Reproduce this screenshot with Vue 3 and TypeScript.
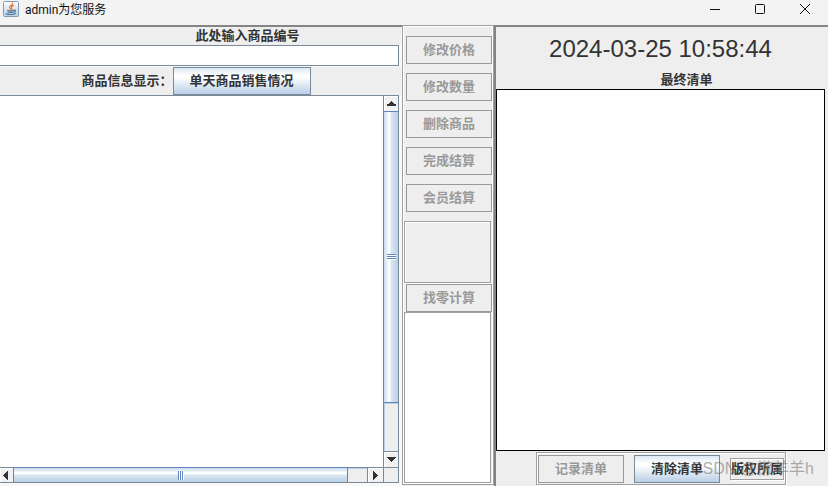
<script setup lang="ts">
import { ref } from 'vue'

interface Action {
  label: string
}

const code = ref('')
const info = ref('')
const receipt = ref('')
const change = ref('')
const now = ref('2024-03-25 10:58:44')

const actions: Action[] = [
  { label: '修改价格' },
  { label: '修改数量' },
  { label: '删除商品' },
  { label: '完成结算' },
  { label: '会员结算' },
]
</script>

<template>
  <div class="window">
    <header class="titlebar">
      <svg class="logo" viewBox="0 0 16 16" aria-hidden="true">
        <defs>
          <linearGradient id="tile" x1="0" y1="0" x2="0" y2="1">
            <stop offset="0" stop-color="#fdfeff" />
            <stop offset="1" stop-color="#b9cfe4" />
          </linearGradient>
        </defs>
        <rect x="0.5" y="0.5" width="15" height="15" rx="1" fill="url(#tile)" stroke="#7f9bb6" />
        <path d="M9.6 2.2C10 4 6.2 4.8 6.6 6.4c.2.8 1 1.2 1.2 2M10.6 4.4C8.6 5 8 5.900 8.800 7c.4.6.1 1.100-.3 1.500" fill="none" stroke="#e8782c" stroke-width="1.200" stroke-linecap="round" />
        <path d="M4.500 9.200c1.500.7 4.700.7 6.200 0M5 11c1.500.6 3.800.6 5.200 0M11 9.200c2-.6 2.200 1.500.2 2M3.200 12.700c2.200 1.200 7 1.100 9.300-.1" fill="none" stroke="#4b7196" stroke-width="1.100" stroke-linecap="round" />
      </svg>
      <span class="title">admin为您服务</span>
      <div class="controls">
        <button type="button" aria-label="最小化">
          <svg viewBox="0 0 12 12"><path d="M1 6.500h10" /></svg>
        </button>
        <button type="button" aria-label="最大化">
          <svg viewBox="0 0 12 12"><rect x="1.500" y="1.500" width="9" height="9" rx="1" /></svg>
        </button>
        <button type="button" aria-label="关闭">
          <svg viewBox="0 0 12 12"><path d="M1 1l10 10M11 1L1 11" /></svg>
        </button>
      </div>
    </header>

    <main class="body">
      <section class="entry">
        <label class="caption" for="code">此处输入商品编号</label>
        <input id="code" v-model="code" class="code" type="text" />
        <div class="toolbar">
          <label for="info">商品信息显示：</label>
          <button type="button" class="btn wide">单天商品销售情况</button>
        </div>
        <div class="scrollpane">
          <textarea id="info" v-model="info" class="view"></textarea>
          <div class="vbar">
            <button type="button" class="arrow" aria-label="向上">
              <svg viewBox="0 0 9 5"><path d="M4 0h1v1h1v1h1v1h2v2H0V3h2V2h1V1h1z" /></svg>
            </button>
            <div class="vthumb"><i class="grip"></i></div>
            <div class="vtrack"></div>
            <button type="button" class="arrow" aria-label="向下">
              <svg viewBox="0 0 9 5"><path d="M0 0h9v1H8v1H7v1H6v1H5v1H4V4H3V3H2V2H1V1H0z" /></svg>
            </button>
          </div>
          <div class="hbar">
            <button type="button" class="arrow first" aria-label="向左">
              <svg class="side" viewBox="0 0 5 9"><path d="M4 0h1v9H4V8H3V7H2V6H1V5H0V4h1V3h1V2h1V1h1z" /></svg>
            </button>
            <div class="hthumb"><i class="grip upright"></i></div>
            <div class="htrack"></div>
            <button type="button" class="arrow last" aria-label="向右">
              <svg class="side" viewBox="0 0 5 9"><path d="M0 0h1v1h1v1h1v1h1v1h1v1H4v1H3v1H2v1H1v1H0z" /></svg>
            </button>
          </div>
          <div class="corner"></div>
        </div>
      </section>

      <section class="actions">
        <div class="stack">
          <button v-for="a in actions" :key="a.label" type="button" class="btn" disabled>{{ a.label }}</button>
        </div>
        <div class="slot"></div>
        <button type="button" class="btn" disabled>找零计算</button>
        <textarea v-model="change" class="change" aria-label="找零计算"></textarea>
      </section>

      <section class="receipt">
        <time class="clock">{{ now }}</time>
        <label class="heading" for="receipt">最终清单</label>
        <textarea id="receipt" v-model="receipt" class="list"></textarea>
        <footer class="bottom">
          <div class="group">
            <button type="button" class="btn" disabled>记录清单</button>
            <button type="button" class="btn">清除清单</button>
            <span class="rights">版权所属</span>
          </div>
        </footer>
      </section>
    </main>
    <span class="watermark">CSDN @懒羊羊h</span>
  </div>
</template>

<style>
body {
  margin: 0;
}
</style>

<style scoped>
.window,
.window * {
  box-sizing: border-box;
}
.window {
  position: relative;
  display: flex;
  flex-direction: column;
  height: 100vh;
  overflow: hidden;
  background: #eeeeee;
  color: #333333;
  font: bold 13px/18px "Liberation Sans", "Noto Sans CJK SC", sans-serif;
}
button,
input,
textarea {
  margin: 0;
  padding: 0;
  border: 0;
  border-radius: 0;
  font: inherit;
  color: inherit;
}
textarea {
  display: block;
  resize: none;
  background: #ffffff;
}
.titlebar {
  display: flex;
  align-items: flex-start;
  flex: none;
  height: 25px;
  padding: 1px 1px 0 3px;
  background: #f3f3f3;
}
.logo {
  width: 16px;
  height: 16px;
}
.title {
  margin-left: 6px;
  color: #111111;
  font: 12px/18px Roboto, "Noto Sans CJK SC", sans-serif;
}
.controls {
  display: flex;
  margin-left: auto;
}
.controls button {
  display: flex;
  align-items: center;
  justify-content: center;
  width: 45px;
  height: 16px;
  background: none;
}
.controls svg {
  width: 12px;
  height: 12px;
  fill: none;
  stroke: #111111;
}
.body {
  display: grid;
  grid-template-columns: minmax(0, 402fr) 92px minmax(0, 334fr);
  flex: 1;
  min-height: 0;
}
.entry {
  display: flex;
  flex-direction: column;
  min-height: 0;
  padding: 0 3px 3px 0;
  border-top: 2px solid #848484;
  background: #f8f8f8;
}
.caption {
  flex: none;
  margin-right: -2px;
  padding-left: 94px;
  text-align: center;
  background: #eeeeee;
}
.code {
  flex: none;
  width: 100%;
  height: 21px;
  border: 1px solid #7a8a99;
  border-left: 0;
  background: #ffffff;
}
.toolbar {
  display: flex;
  align-items: center;
  justify-content: center;
  flex: none;
  height: 28px;
  margin: 1px -2px 0 0;
  padding-right: 9px;
  background: #eeeeee;
}
.btn {
  flex: none;
  width: 86px;
  height: 28px;
  border: 1px solid #7a8a99;
  background: linear-gradient(#dde8f3 0%, #ffffff 30%, #ffffff 36%, #b8cfe5 100%);
  white-space: nowrap;
}
.btn.wide {
  width: 138px;
}
.btn:disabled {
  border-color: #999999;
  background: #eeeeee;
  color: #999999;
}
.scrollpane {
  display: grid;
  grid-template: minmax(0, 1fr) 16px / minmax(0, 1fr) 16px;
  flex: 1;
  min-height: 0;
  border-top: 1px solid #7a8a99;
}
.view {
  width: 100%;
  height: 100%;
}
.vbar,
.hbar {
  display: flex;
  background: #eeeeee;
}
.vbar {
  flex-direction: column;
  border-left: 1px solid #7a8a99;
  border-right: 1px solid #7a8a99;
}
.hbar {
  border-top: 1px solid #7a8a99;
  border-bottom: 1px solid #7a8a99;
}
.arrow {
  display: flex;
  align-items: center;
  justify-content: center;
  flex: none;
  width: 14px;
  height: 15px;
  background: #f1f1f1;
  box-shadow: inset 1px 1px #ffffff;
}
.vtrack + .arrow {
  height: 16px;
  border-top: 1px solid #7a8a99;
}
.hbar .arrow {
  width: 16px;
  height: 14px;
}
.hbar .first {
  width: 13px;
  padding-right: 3px;
}
.hbar .last {
  border-left: 1px solid #7a8a99;
}
.arrow svg {
  width: 9px;
  height: 5px;
  fill: #333333;
}
.arrow .side {
  width: 5px;
  height: 9px;
}
.vthumb,
.hthumb {
  display: flex;
  align-items: center;
  justify-content: center;
}
.vthumb {
  flex: 293;
  margin-left: -1px;
  border: 1px solid #6382bf;
  border-right: 0;
  background: linear-gradient(90deg, #c8dbee, #ffffff 36%, #ffffff 40%, #dce8f3 50%, #b8cfe5);
}
.vtrack {
  flex: 47;
  border-left: 1px solid #b8cfe5;
  border-top: 1px solid #b8cfe5;
}
.hthumb {
  flex: 336;
  margin-top: -1px;
  border: 1px solid #6382bf;
  border-bottom: 0;
  background: linear-gradient(#c8dbee, #ffffff 36%, #ffffff 40%, #dce8f3 50%, #b8cfe5);
}
.htrack {
  flex: 19;
  border-top: 1px solid #b8cfe5;
}
.grip {
  width: 9px;
  height: 6px;
  background: repeating-linear-gradient(#6382bf 0 1px, #ffffff 1px 2px);
}
.grip.upright {
  width: 6px;
  height: 9px;
  background: repeating-linear-gradient(90deg, #6382bf 0 1px, #ffffff 1px 2px);
}
.corner {
  border: 1px solid #7a8a99;
  background: #eeeeee;
}
.actions {
  display: flex;
  flex-direction: column;
  min-height: 0;
  margin-bottom: 1px;
  padding: 10px 0 1px 1px;
  border: 1px solid #a0a0a0;
  box-shadow: inset 1px 1px #ffffff, inset -1px -1px #ffffff;
}
.actions .btn {
  margin-left: 2px;
}
.stack {
  display: flex;
  flex-direction: column;
  gap: 9px;
}
.slot {
  flex: none;
  width: 87px;
  height: 62px;
  margin: 9px 0 1px;
  border: 1px solid #a0a0a0;
  box-shadow: inset 1px 1px #ffffff, 0 1px #ffffff;
}
.change {
  flex: 1;
  width: 87px;
  min-height: 0;
  border: 1px solid #a0a0a0;
}
.receipt {
  display: flex;
  flex-direction: column;
  min-height: 0;
  border-top: 2px solid #848484;
  border-left: 2px solid #848484;
}
.clock {
  flex: none;
  padding-right: 3px;
  text-align: center;
  font: 24px/44px "Liberation Sans", sans-serif;
}
.heading {
  flex: none;
  height: 18px;
  padding-left: 49px;
  text-align: center;
}
.list {
  flex: 1;
  width: calc(100% - 3px);
  min-height: 0;
  border: 1px solid #000000;
}
.bottom {
  display: flex;
  justify-content: center;
  flex: none;
  padding: 1px 2px 1px 0;
}
.group {
  display: flex;
  align-items: center;
  gap: 10px;
  height: 33px;
  padding: 0 1px;
  border: 1px solid #a0a0a0;
  box-shadow: inset 1px 1px #ffffff, 1px 1px #ffffff;
}
.rights {
  height: 22px;
  border: 1px solid #a0a0a0;
  line-height: 20px;
  box-shadow: inset 1px 1px #ffffff, 1px 1px #ffffff;
}
.watermark {
  position: absolute;
  right: 14px;
  bottom: 6px;
  color: rgba(120, 120, 120, 0.6);
  font: 16px/22px "Liberation Sans", "Noto Sans CJK SC", sans-serif;
  pointer-events: none;
}
</style>
